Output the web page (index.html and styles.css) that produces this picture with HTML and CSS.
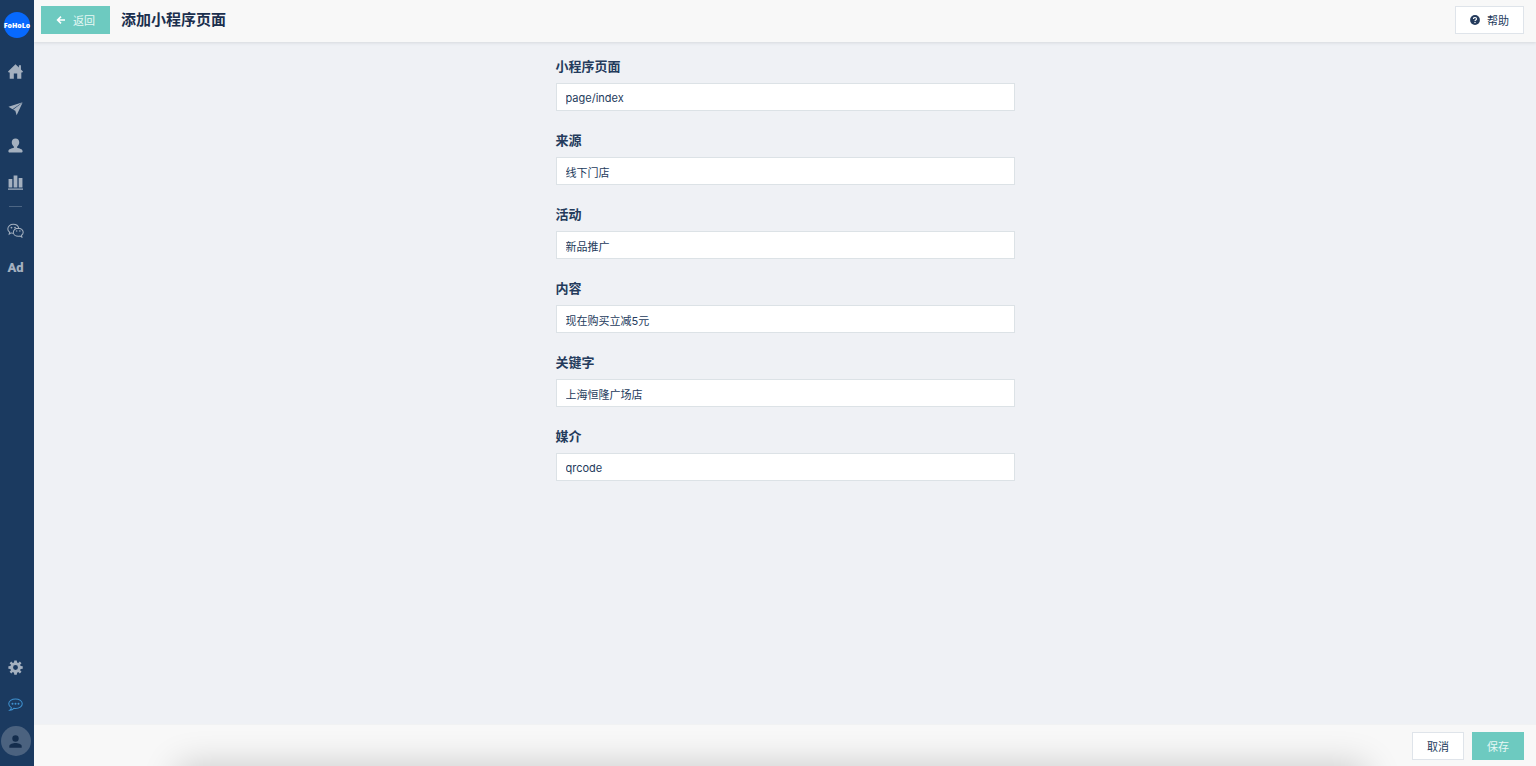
FILE: index.html
```
<!DOCTYPE html>
<html lang="zh-CN">
<head>
<meta charset="UTF-8">
<meta name="viewport" content="width=device-width, initial-scale=1">
<title>添加小程序页面</title>
<link rel="stylesheet" href="styles.css">
</head>

<body>

<aside class="sidebar">
  <a href="#" class="logo">FoHoLo</a>

  <nav class="menu">
    <a href="#" aria-label="首页">
      <svg viewBox="0 0 16 16"><path d="M8 0.3 L11.6 3.7 V1.4 H13.8 V5.8 L16 8 L15.2 9 H14.2 V15.7 H9.8 V10.2 H6.2 V15.7 H1.8 V9 H0.8 L0 8 Z"/></svg>
    </a>
    <a href="#" aria-label="发送">
      <svg viewBox="0 0 16 16"><path d="M0.5 6.2 L15.6 1.4 L4.8 8.8 Z"/><path d="M15.6 1.6 L9.2 15.2 L7.8 10.4 L5.4 9.2 Z"/></svg>
    </a>
    <a href="#" aria-label="用户">
      <svg viewBox="0 0 16 16"><path d="M8 0.5 C10.4 0.5 12 2.2 12 4.6 C12 6.9 11 8.2 9.7 9.2 V10.4 C12 11.4 15.6 11.5 15.6 14.2 C15.6 15.2 15 15.5 14.2 15.5 H1.8 C1 15.5 0.4 15.2 0.4 14.2 C0.4 11.5 4 11.4 6.3 10.4 V9.2 C5 8.2 4 6.9 4 4.6 C4 2.2 5.6 0.5 8 0.5 Z"/></svg>
    </a>
    <a href="#" aria-label="统计">
      <svg viewBox="0 0 16 16"><path d="M0.6 4.3 H4.6 V13.2 H0.6 Z M6 0.4 H10 V13.2 H6 Z M11.4 3.1 H15.4 V13.2 H11.4 Z M0 14.4 H16 V15.8 H0 Z"/></svg>
    </a>
    <hr>
    <a href="#" aria-label="微信">
      <svg class="line wide" viewBox="0 0 18 16">
        <path d="M6.4 10.9 C5.6 10.9 4.9 10.8 4.3 10.5 L2.3 11.8 L2.7 9.7 C1.4 8.8 0.8 7.6 0.8 6.3 C0.8 3.4 3.5 1.3 6.6 1.3 C9.6 1.3 12 3.1 12.4 5.5"/>
        <path d="M11.9 5.6 C9 5.6 6.7 7.5 6.7 9.9 C6.7 12.4 9 14.2 11.9 14.2 C12.6 14.2 13.3 14.1 13.9 13.9 L15.8 15.1 L15.4 13.1 C16.5 12.4 17.2 11.2 17.2 9.9 C17.2 7.5 14.8 5.6 11.9 5.6 Z"/>
        <circle cx="4.7" cy="4.9" r=".4"/><circle cx="8.5" cy="4.9" r=".4"/><circle cx="10.2" cy="8.6" r=".3"/><circle cx="13.6" cy="8.6" r=".3"/>
      </svg>
    </a>
    <a href="#" class="ad">Ad</a>
  </nav>

  <nav class="menu menu-bottom">
    <a href="#" aria-label="设置">
      <svg viewBox="0 0 16 16"><path fill-rule="evenodd" d="M6.7 0.4 H9.3 L9.7 2.6 L11 3.2 L12.6 1.7 L14.4 3.5 L12.9 5.1 L13.5 6.4 L15.7 6.7 V9.3 L13.5 9.7 L12.9 11 L14.4 12.6 L12.6 14.4 L11 12.9 L9.7 13.5 L9.3 15.7 H6.7 L6.4 13.5 L5.1 12.9 L3.5 14.4 L1.7 12.6 L3.2 11 L2.6 9.7 L0.4 9.3 V6.7 L2.6 6.4 L3.2 5.1 L1.7 3.5 L3.5 1.7 L5.1 3.2 L6.4 2.6 Z M8 5.4 A2.6 2.6 0 1 0 8 10.6 A2.6 2.6 0 1 0 8 5.4 Z"/></svg>
    </a>
    <a href="#" class="chat" aria-label="消息">
      <svg class="line" viewBox="0 0 16 16">
        <path d="M8 2.2 C3.9 2.2 0.8 4.4 0.8 7.2 C0.8 9 1.9 10.4 3.6 11.3 C3.6 12.5 3 13.4 2 14.1 C3.9 14 5.3 13.2 6.2 12.1 C6.8 12.2 7.4 12.2 8 12.2 C12.1 12.2 15.2 10 15.2 7.2 C15.2 4.4 12.1 2.2 8 2.2 Z"/>
        <circle cx="4.8" cy="7.2" r=".5"/><circle cx="8" cy="7.2" r=".5"/><circle cx="11.2" cy="7.2" r=".5"/>
      </svg>
    </a>
    <a href="#" class="avatar" aria-label="账户">
      <svg viewBox="0 0 16 16"><circle cx="8" cy="4.8" r="3.4"/><path d="M1.4 14.6 V12.8 C1.4 10.4 5.6 9.5 8 9.5 C10.4 9.5 14.6 10.4 14.6 12.8 V14.6 Z"/></svg>
    </a>
  </nav>
</aside>

<div class="page">
  <header class="topbar">
    <button type="button" class="btn btn-primary">
      <svg class="arrow" viewBox="0 0 10 10"><path d="M9 5 H2 M5 1.6 L1.6 5 L5 8.4"/></svg>
      返回
    </button>
    <h1>添加小程序页面</h1>
    <button type="button" class="btn btn-help">
      <svg class="help" viewBox="0 0 10 10"><circle cx="5" cy="5" r="4.9"/><path d="M3.5 3.9 C3.5 2 6.5 2 6.5 3.9 C6.5 4.9 5 4.9 5 6"/><circle class="dot" cx="5" cy="7.5" r=".7"/></svg>
      帮助
    </button>
  </header>

  <main class="content">
    <form class="form" id="page-form">
      <div class="field">
        <label for="path">小程序页面</label>
        <input type="text" id="path" value="page/index">
      </div>
      <div class="field">
        <label for="source">来源</label>
        <input type="text" id="source" value="线下门店">
      </div>
      <div class="field">
        <label for="campaign">活动</label>
        <input type="text" id="campaign" value="新品推广">
      </div>
      <div class="field">
        <label for="content">内容</label>
        <input type="text" id="content" value="现在购买立减5元">
      </div>
      <div class="field">
        <label for="keyword">关键字</label>
        <input type="text" id="keyword" value="上海恒隆广场店">
      </div>
      <div class="field">
        <label for="medium">媒介</label>
        <input type="text" id="medium" value="qrcode">
      </div>
    </form>
  </main>

  <footer class="actions">
    <button type="button" class="btn">取消</button>
    <button type="submit" form="page-form" class="btn btn-primary">保存</button>
  </footer>
</div>

</body>
</html>
```

FILE: styles.css
```
*{
box-sizing:border-box;
}

body{
margin:0;
display:flex;
min-height:100vh;
font-family:Inter,"Noto Sans CJK SC",sans-serif;
font-size:11px;
color:#243b5c;
background:#eff1f5;
}

a{
color:inherit;
text-decoration:none;
}

svg{
display:block;
width:15px;
height:15px;
fill:currentColor;
}

.line{
fill:none;
stroke:currentColor;
stroke-width:1.1;
}

.wide{
width:17px;
}

/* sidebar */

.sidebar{
flex:none;
width:34px;
display:flex;
flex-direction:column;
background:#1b3a60;
color:#a4b0bf;
}

.logo{
width:26px;
height:26px;
margin:12px auto 15px;
display:flex;
align-items:center;
justify-content:center;
border-radius:50%;
background:#0769fd;
color:white;
font-family:"Open Sans",sans-serif;
font-size:7px;
font-weight:800;
}

.menu{
width:31px;
display:flex;
flex-direction:column;
align-items:center;
}

.menu a{
height:37px;
display:flex;
align-items:center;
justify-content:center;
}

.menu hr{
width:13px;
height:1px;
margin:5px 0;
border:0;
background:#4d6684;
}

.menu .ad{
font-family:Roboto,sans-serif;
font-size:13px;
font-weight:900;
}

.menu-bottom{
margin-top:auto;
padding-bottom:10px;
}

.menu .chat{
color:#3f91cf;
}

.menu .avatar{
width:30px;
height:30px;
margin-top:3px;
border-radius:50%;
background:#4b627f;
color:#142d4d;
}

/* page */

.page{
flex:1;
min-width:0;
display:flex;
flex-direction:column;
}

.topbar{
display:flex;
align-items:center;
height:42px;
padding:0 12px 2px 7px;
background:#f8f8f8;
box-shadow:0 1px 3px #d5d8de;
clip-path:inset(0 0 -6px 0);
}

h1{
margin:0 auto 0 11px;
font-size:15px;
line-height:20px;
font-weight:600;
color:#1b2f4e;
}

.btn{
height:28px;
padding:0 14px;
display:flex;
align-items:center;
border:1px solid #dfe4ea;
background:white;
color:#243b5c;
font:inherit;
cursor:pointer;
}

.btn-primary{
border-color:#6dcac0;
background:#6dcac0;
color:#e6f8f5;
}

.arrow{
width:10px;
height:10px;
margin-right:7px;
fill:none;
stroke:white;
stroke-width:1.6;
}

.help{
width:10px;
height:10px;
margin-right:7px;
}

.help path{
fill:none;
stroke:white;
stroke-width:1.2;
}

.help .dot{
fill:white;
}

.content{
flex:1;
padding:14px 20px;
}

.form{
max-width:459px;
margin:0 auto;
display:flex;
flex-direction:column;
gap:19px;
}

.field label{
display:block;
margin-bottom:7px;
font-size:13px;
line-height:20px;
font-weight:600;
}

.field input{
display:block;
width:100%;
height:28px;
padding:1px 9px 0;
border:1px solid #dce2e6;
border-radius:0;
background:white;
color:#243b5c;
font:inherit;
}

/* bottom bar */

.actions{
position:relative;
overflow:hidden;
display:flex;
justify-content:flex-end;
gap:8px;
padding:7px 12px 6px;
border-top:1px solid #f1f2f3;
background:#f8f8f8;
}

/* soft shade along the lower edge */
.actions::after{
content:"";
position:absolute;
left:144px;
right:170px;
top:100%;
height:40px;
box-shadow:0 0 36px rgba(0,0,0,0.2);
pointer-events:none;
}
```
